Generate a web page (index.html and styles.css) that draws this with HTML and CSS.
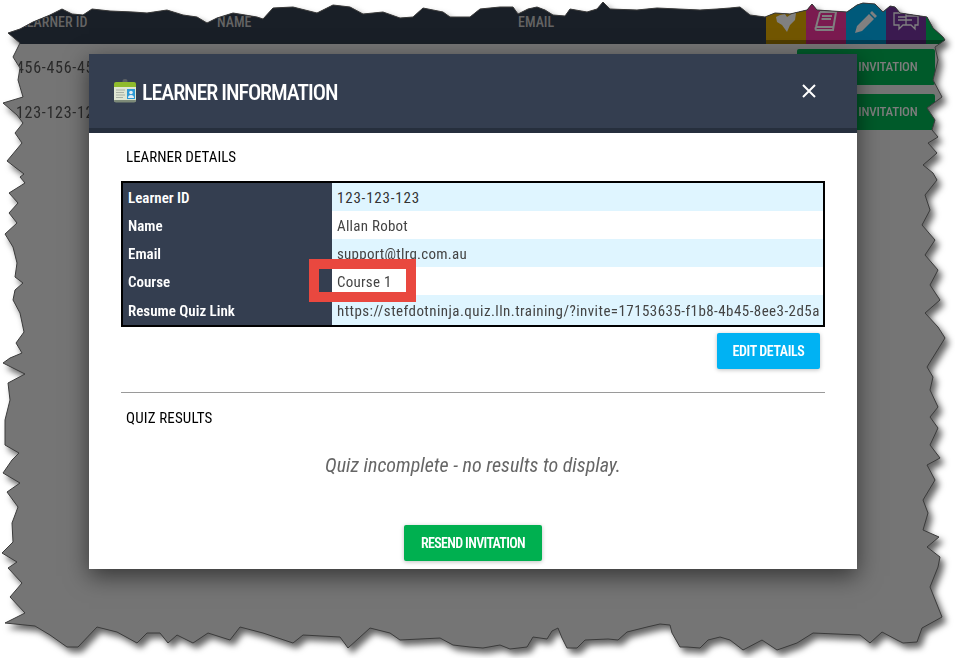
FILE: index.html
```html
<!DOCTYPE html>
<html lang="en">
<head>
<meta charset="utf-8">
<title>Learner Information</title>
<link rel="stylesheet" href="styles.css">
</head>
<body>
<svg class="defs" width="0" height="0" aria-hidden="true">
  <defs>
    <clipPath id="torn">
      <polygon id="tornEdge" points="8,33 20,29 33,22 50,15 62,9 72,14 83,15 92,9 110,11 133,12 147,13 167,10 183,15 197,17 207,23 217,18 233,13 257,17 263,19 273,8 293,7 317,13 333,5 350,7 363,14 383,12 400,18 413,17 423,8 443,12 450,17 470,17 480,9 500,7 513,7 518,14 528,9 537,7 545,10 553,15 565,16 570,9 587,12 597,9 603,2 610,9 637,10 657,8 700,10 717,9 730,8 740,7 750,15 765,17 775,13 790,14 807,10 812,4 817,10 847,12 857,5 863,3 875,4 883,12 890,6 895,7 900,13 927,17 933,28 943,37 945,40 935,47 938,60 933,80 942,97 927,108 935,120 932,130 938,137 928,143 937,153 923,165 933,173 937,180 925,195 930,210 922,225 935,240 925,255 938,270 930,285 940,300 925,313 938,327 945,338 927,367 933,377 930,390 938,407 930,417 938,428 930,445 940,458 927,465 935,480 923,500 928,513 923,530 939,537 927,547 940,557 938,567 930,587 942,617 922,628 917,642 903,643 897,640 882,632 870,643 860,635 813,633 797,643 777,650 762,640 743,650 730,640 720,637 708,640 700,648 687,647 680,647 672,633 670,625 660,624 647,627 627,632 618,640 608,639 585,640 577,648 567,648 562,638 558,628 552,631 547,639 533,637 527,647 510,649 500,645 483,648 470,647 453,645 440,638 400,640 390,633 370,628 348,648 340,637 303,635 293,643 263,633 240,627 230,640 208,633 193,643 177,635 168,643 160,633 147,633 137,643 117,632 97,627 78,647 67,647 50,635 35,626 5,623 25,613 10,597 22,583 8,568 17,562 2,553 13,542 12,523 18,507 7,492 20,483 3,473 12,460 19,453 5,445 5,420 10,400 8,383 25,374 3,363 10,358 22,353 16,343 24,332 20,313 13,300 15,290 23,283 15,277 17,263 13,247 5,234 17,223 9,213 18,203 9,193 25,183 20,177 24,174 7,161 22,143 15,133 23,123 17,115 3,103 23,97 18,80 20,68 13,57 20,43"/>
    </clipPath>
  </defs>
</svg>

<div class="torn-shadow">
  <div class="sheet">
    <header class="table-head">
      <div class="col col-id">LEARNER ID</div>
      <div class="col col-name">NAME</div>
      <div class="col col-email">EMAIL</div>
      <div class="tabs">
        <div class="tab tab-yellow">
          <svg viewBox="0 0 24 24" class="tab-icon"><path class="fill" d="M2 7 L6 5 L11 4 L13 7 L19 3 L22 3 L21 10 L16 15 L13 22 L8 15 L3 12 Z"/></svg>
        </div>
        <div class="tab tab-magenta">
          <svg viewBox="0 0 24 24" class="tab-icon"><path class="line" d="M6 2 H22 L19 20 H3 C1 20 1 17 3 17 H19 M6 2 L2 17 M8 6 H18 M7.5 9 H17"/></svg>
        </div>
        <div class="tab tab-blue">
          <svg viewBox="0 0 24 24" class="tab-icon"><path class="fill" d="M18 1 L23 6 L21 8 L16 3 Z M15 4 L20 9 L8 21 L1 23 L3 16 Z"/></svg>
        </div>
        <div class="tab tab-purple">
          <svg viewBox="0 0 28 24" class="tab-icon tab-icon-wide"><path class="line thin" d="M2 3 H14 V6 H26 V15 H23 V19 L19 15 H11 L7 19 V15 H2 Z M6 7 H14 M6 10 H20 M14 6 V15"/></svg>
        </div>
        <div class="tab tab-green"></div>
      </div>
    </header>
    <div class="table-row">
      <span class="row-id">456-456-456</span>
      <span class="row-action">RESEND INVITATION</span>
    </div>
    <div class="table-row">
      <span class="row-id">123-123-123</span>
      <span class="row-action">RESEND INVITATION</span>
    </div>

    <section class="modal">
      <div class="modal-head">
        <svg class="id-icon" viewBox="0 0 24 24" aria-hidden="true">
          <rect x="9.5" y="0" width="5" height="5" rx="2" fill="#5a5f63"/>
          <path d="M1 5 Q1 3 3 3 H21 Q23 3 23 5 V9 H1 Z" fill="#8fbb2c"/>
          <path d="M1 8 H23 V21 Q23 23 21 23 H3 Q1 23 1 21 Z" fill="#dfe6d3"/>
          <path d="M1 21 H23 Q23 23.500 21 23.500 H3 Q1 23.500 1 21 Z" fill="#7d8a78"/>
          <path d="M3 11 H12 M3 13.500 H11 M3 16 H12 M3 18.500 H10" stroke="#a8b0a4" stroke-width="1"/>
          <rect x="14" y="10" width="8" height="10" fill="#2d9ad6"/>
          <circle cx="18" cy="13.500" r="1.800" fill="#e7eef4"/>
          <path d="M15 19 Q15 16 18 16 Q21 16 21 19 Z" fill="#e7eef4"/>
        </svg>
        <h1 class="modal-title">LEARNER INFORMATION</h1>
        <svg class="close" viewBox="0 0 14 14" aria-label="Close"><path d="M1 1 L13 13 M13 1 L1 13"/></svg>
      </div>
      <div class="modal-body">
        <h2 class="section-title details-title">LEARNER DETAILS</h2>
        <div class="details-wrap">
          <table class="details">
            <tr><th>Learner ID</th><td class="val-digits">123-123-123</td></tr>
            <tr><th>Name</th><td>Allan Robot</td></tr>
            <tr><th>Email</th><td>support@tlrg.com.au</td></tr>
            <tr><th>Course</th><td>Course 1</td></tr>
            <tr><th>Resume Quiz Link</th><td class="val-link">https://stefdotninja.quiz.lln.training/?invite=17153635-f1b8-4b45-8ee3-2d5a</td></tr>
          </table>
          <div class="callout"></div>
        </div>
        <div class="edit-row"><button class="btn btn-blue">EDIT DETAILS</button></div>
        <hr class="divider">
        <h2 class="section-title results-title">QUIZ RESULTS</h2>
        <p class="empty">Quiz incomplete - no results to display.</p>
        <div class="resend-row"><button class="btn btn-green">RESEND INVITATION</button></div>
      </div>
    </section>
  </div>
  <svg class="edge" viewBox="0 0 955 658" width="955" height="658" aria-hidden="true"><use href="#tornEdge"/></svg>
</div>
</body>
</html>
```
FILE: styles.css
```css
* { box-sizing: border-box; }

html, body {
  margin: 0;
  width: 955px;
  height: 658px;
  overflow: hidden;
  background: #fff;
}

body {
  position: relative;
  font-family: "Roboto", sans-serif;
  font-stretch: 75%;
}

.defs { position: absolute; }

.torn-shadow {
  position: relative;
  width: 955px;
  height: 658px;
  filter: drop-shadow(4px 5px 3px rgba(0, 0, 0, .6));
}

.sheet {
  position: relative;
  width: 955px;
  height: 658px;
  background: #757575;
  clip-path: url(#torn);
}

.edge {
  position: absolute;
  left: 0;
  top: 0;
  pointer-events: none;
}

.edge use {
  fill: none;
  stroke: #3c3c3c;
  stroke-width: 1;
}

/* dimmed page beneath the dialog */
.table-head {
  display: flex;
  height: 44px;
  background: #191f27;
  color: #646464;
  font-size: 14px;
  font-weight: 500;
  line-height: 44px;
}

.col { flex: none; }
.col-id { width: 197px; margin-left: 20px; }
.col-name { width: 301px; }
.col-email { width: 248px; }

.tabs {
  display: flex;
  flex: 1;
}

.tab {
  width: 40px;
  height: 44px;
  display: flex;
  align-items: flex-start;
  justify-content: center;
  padding-top: 9px;
  border-bottom: 4px solid rgba(0, 0, 0, .3);
}

.tab-yellow { background: #725600; }
.tab-magenta { background: #7b1b50; }
.tab-blue { background: #00597a; }
.tab-purple { background: #3b1a50; }
.tab-green { background: #005f2e; flex: 1; }

.tab-icon { width: 24px; height: 24px; margin-top: 1px; }
.tab-icon-wide { width: 28px; }
.tab-icon .fill { fill: #808080; }
.tab-icon .line { fill: none; stroke: #808080; stroke-width: 2; }
.tab-icon .line.thin { stroke-width: 1.300; }

.table-row {
  display: flex;
  justify-content: space-between;
  align-items: center;
  height: 36px;
  margin-top: 9px;
  padding: 0 20px 0 16px;
  font-size: 16px;
  letter-spacing: .7px;
  color: #2a2a2a;
}

.table-head + .table-row { margin-top: 5px; }

.row-action {
  width: 138px;
  height: 36px;
  line-height: 36px;
  text-align: center;
  background: #005a2a;
  color: #7d7d7d;
  border-radius: 2px;
  font-size: 13px;
  font-weight: 500;
  letter-spacing: -.2px;
  white-space: nowrap;
  overflow: hidden;
}

/* dialog */
.modal {
  position: absolute;
  left: 89px;
  top: 54px;
  width: 768px;
  height: 515px;
  background: #fff;
  box-shadow: 0 7px 22px rgba(0, 0, 0, .55);
}

.modal-head {
  display: flex;
  align-items: center;
  height: 79px;
  padding: 2px 41px 0 24px;
  background: #343e50;
  border-bottom: 5px solid #262f3d;
}

.id-icon { width: 24px; height: 24px; flex: none; margin-top: -2px; }

.modal-title {
  flex: 1;
  margin: 0 0 0 5px;
  font-size: 22px;
  font-weight: 500;
  letter-spacing: -1.05px;
  color: #fff;
  white-space: nowrap;
}

.close { width: 14px; height: 14px; flex: none; margin-top: -2px; }
.close path { stroke: #fff; stroke-width: 2; fill: none; }

.modal-body { padding: 0 32px; }

.section-title {
  margin: 0;
  padding-left: 5px;
  font-size: 15px;
  font-weight: 400;
  color: #000;
  line-height: 20px;
}

.details-title { padding-top: 14px; }

.details-wrap {
  position: relative;
  margin-top: 14px;
}

.details {
  width: 704px;
  border-collapse: separate;
  border-spacing: 0;
  border: 2px solid #000;
  table-layout: fixed;
}

.details th {
  width: 209px;
  height: 28px;
  padding: 2px 0 0 5px;
  background: #343e50;
  color: #fff;
  font-size: 15px;
  font-weight: 600;
  text-align: left;
}

.details td {
  padding: 2px 0 0 5px;
  font-size: 15px;
  color: #444;
  white-space: nowrap;
  overflow: hidden;
  letter-spacing: .25px;
}

.details tr:nth-child(odd) td { background: #dff5ff; }
.details tr:last-child th { height: 30px; }
.details .val-digits { color: #333; letter-spacing: .8px; }
.details .val-link { letter-spacing: .44px; }

.callout {
  position: absolute;
  left: 188px;
  top: 78px;
  width: 107px;
  height: 43px;
  border: 10px solid #e9483f;
}

.edit-row {
  display: flex;
  justify-content: flex-end;
  margin-top: 6px;
  padding-right: 5px;
}

.btn {
  border: 0;
  border-radius: 2px;
  height: 36px;
  padding: 0;
  color: #fff;
  font-family: inherit;
  font-stretch: inherit;
  font-size: 14px;
  font-weight: 600;
  letter-spacing: -.4px;
  white-space: nowrap;
  box-shadow: 0 1px 4px rgba(0, 0, 0, .25);
}

.btn-blue { width: 103px; background: #00b2f3; }
.btn-green { width: 138px; background: #00b050; letter-spacing: -.65px; }

.divider {
  margin: 23px 0 0;
  border: 0;
  border-top: 1px solid #9a9a9a;
}

.results-title { margin-top: 15px; letter-spacing: .15px; }

.empty {
  margin: 25px 0 0;
  text-align: center;
  font-size: 20px;
  line-height: 24px;
  font-style: italic;
  color: #666;
}

.resend-row {
  display: flex;
  justify-content: center;
  margin-top: 48px;
}
```
